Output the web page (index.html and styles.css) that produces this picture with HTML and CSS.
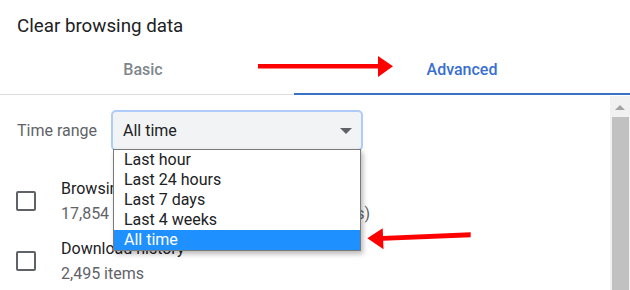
FILE: index.html
```html
<!DOCTYPE html>
<html>
<head>
<meta charset="utf-8">
<link rel="stylesheet" href="styles.css">
</head>
<body>
<div class="dialog">
  <h1 class="title">Clear browsing data</h1>
  <div class="tabs">
    <div class="tab tab-basic">Basic</div>
    <div class="tab tab-active">Advanced</div>
  </div>
  <div class="body">
    <div class="content">
      <div class="time-row">
        <span class="time-label">Time range</span>
        <div class="select">
          <span class="select-value">All time</span>
          <span class="caret"></span>
          <ul class="menu">
            <li>Last hour</li>
            <li>Last 24 hours</li>
            <li>Last 7 days</li>
            <li>Last 4 weeks</li>
            <li class="selected">All time</li>
          </ul>
        </div>
      </div>
      <div class="items">
        <div class="item">
          <span class="checkbox"></span>
          <div class="item-text">
            <div class="item-title">Browsing history</div>
            <div class="item-sub">17,854 items (and more on synced devices)</div>
          </div>
        </div>
        <div class="item">
          <span class="checkbox"></span>
          <div class="item-text">
            <div class="item-title">Download history</div>
            <div class="item-sub">2,495 items</div>
          </div>
        </div>
      </div>
    </div>
    <div class="scrollbar">
      <span class="scroll-up"></span>
      <div class="thumb"></div>
    </div>
  </div>
  <svg class="annotations" width="630" height="290" viewBox="0 0 630 290">
    <rect x="258" y="64" width="122" height="4.5" fill="#f00"/>
    <polygon points="378,56 393,66.3 378,77" fill="#f00"/>
    <polygon points="383,236 470.7,232.3 470.7,237.3 383,240.7" fill="#f00"/>
    <polygon points="367.3,238.3 382.7,228.3 383.5,249.3" fill="#f00"/>
  </svg>
</div>
</body>
</html>
```

FILE: styles.css
```css
* { box-sizing: border-box; }

html, body {
  margin: 0;
  padding: 0;
  background: #fff;
}

body {
  font-family: Roboto, "Liberation Sans", sans-serif;
  font-size: 16px;
  color: #202124;
  width: 630px;
  height: 290px;
  overflow: hidden;
}

.dialog {
  position: relative;
  width: 630px;
  height: 290px;
}

.title {
  margin: 0;
  height: 45px;
  padding: 14px 0 0 17px;
  font-size: 18.75px;
  line-height: 24px;
  font-weight: 400;
  color: #202124;
}

.tabs {
  display: flex;
  height: 50px;
  border-bottom: 1px solid #dadce0;
}

.tab {
  position: relative;
  height: 49px;
  line-height: 49px;
  text-align: center;
  font-weight: 500;
  font-size: 16px;
}

.tab-basic {
  width: 294px;
  padding-right: 8px;
  color: #80868b;
}

.tab-active {
  flex: 1;
  color: #3a6fcf;
}

.tab-active::after {
  content: "";
  position: absolute;
  left: 0;
  right: 0;
  bottom: -1px;
  height: 2px;
  background: #3a72c6;
}

.body {
  display: flex;
  height: 195px;
}

.content {
  flex: 1;
}

.time-row {
  display: flex;
  align-items: center;
  margin-top: 15px;
  padding-left: 17px;
}

.time-label {
  color: #5f6368;
  width: 94px;
}

.select {
  position: relative;
  width: 252px;
  height: 41px;
  border: 2px solid #aecbfa;
  border-radius: 5px;
  background: #f1f3f4;
  display: flex;
  align-items: center;
  padding-left: 10px;
}

.select-value {
  flex: 1;
  color: #202124;
}

.caret {
  width: 0;
  height: 0;
  border-left: 6px solid transparent;
  border-right: 6px solid transparent;
  border-top: 6px solid #5f6368;
  margin-right: 9px;
}

.menu {
  position: absolute;
  top: 37px;
  left: 0;
  width: 248px;
  margin: 0;
  padding: 0;
  list-style: none;
  background: #fff;
  border: 1px solid #7a7a7a;
  box-shadow: 2px 3px 5px rgba(0, 0, 0, 0.28);
  z-index: 2;
}

.menu li {
  height: 20px;
  line-height: 20px;
  padding-left: 10px;
  color: #202124;
}

.menu li.selected {
  background: #1e90ff;
  color: #fff;
}

.items {
  margin-top: 25px;
  display: flex;
  flex-direction: column;
  gap: 10px;
}

.item {
  display: flex;
  align-items: center;
  height: 50px;
  padding-left: 16px;
}

.checkbox {
  width: 20px;
  height: 20px;
  border: 2px solid #5f6368;
  border-radius: 2px;
  margin-right: 25px;
}

.item-text {
  line-height: 25px;
  white-space: nowrap;
}

.item-title {
  color: #202124;
}

.item-sub {
  color: #5f6368;
}

.scrollbar {
  width: 20px;
  background: #f1f1f1;
  margin-top: 1px;
  display: flex;
  flex-direction: column;
  align-items: flex-end;
}

.scroll-up {
  display: block;
  align-self: center;
  margin-top: 9px;
  width: 0;
  height: 0;
  border-left: 5px solid transparent;
  border-right: 5px solid transparent;
  border-bottom: 5px solid #a3a3a3;
}

.thumb {
  margin-top: 7px;
  width: 17px;
  margin-right: 1px;
  flex: 1;
  background: #c1c1c1;
}

.annotations {
  position: absolute;
  left: 0;
  top: 0;
  pointer-events: none;
  z-index: 5;
}
```
